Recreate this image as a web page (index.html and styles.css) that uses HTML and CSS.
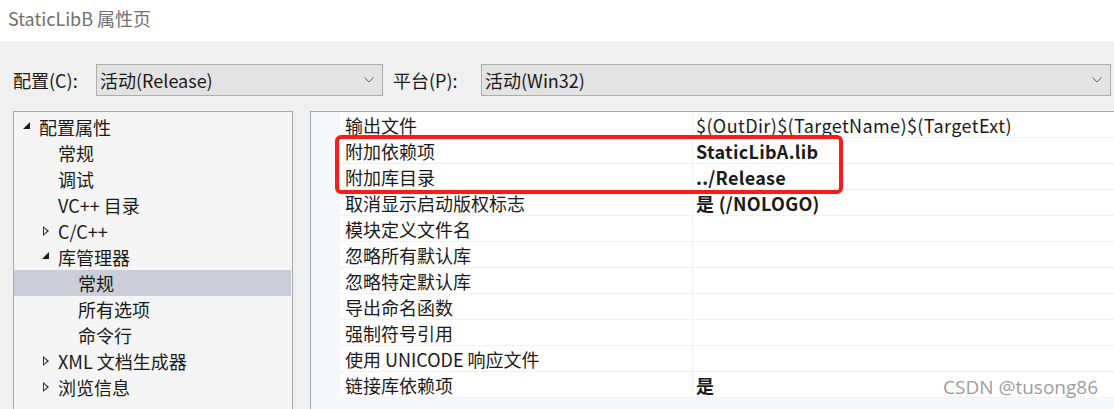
FILE: index.html
```html
<!DOCTYPE html>
<html lang="zh-CN">
<head>
  <meta charset="UTF-8" />
  <title>StaticLibB 属性页</title>
  <link rel="stylesheet" href="styles.css">
</head>
<body>
  <div class="titlebar">StaticLibB 属性页</div>

  <div class="dialog">
    <div class="toolbar">
      <label class="lbl cfg-lbl">配置(C):</label>
      <div class="combo cfg-combo">
        <span>活动(Release)</span>
        <svg class="chev" width="10" height="6" viewBox="0 0 10 6"><polyline points="0.5,0.5 5,5 9.5,0.5" fill="none" stroke="#606060" stroke-width="1"/></svg>
      </div>
      <label class="lbl plat-lbl">平台(P):</label>
      <div class="combo plat-combo">
        <span>活动(Win32)</span>
        <svg class="chev" width="10" height="6" viewBox="0 0 10 6"><polyline points="0.5,0.5 5,5 9.5,0.5" fill="none" stroke="#606060" stroke-width="1"/></svg>
      </div>
    </div>

    <div class="panes">
      <div class="tree">
        <div class="node lv0"><span class="twisty open"></span>配置属性</div>
        <div class="node lv1"><span class="twisty"></span>常规</div>
        <div class="node lv1"><span class="twisty"></span>调试</div>
        <div class="node lv1"><span class="twisty"></span>VC++ 目录</div>
        <div class="node lv1"><span class="twisty shut"></span>C/C++</div>
        <div class="node lv1"><span class="twisty open"></span>库管理器</div>
        <div class="node lv2 selected"><span class="twisty"></span>常规</div>
        <div class="node lv2"><span class="twisty"></span>所有选项</div>
        <div class="node lv2"><span class="twisty"></span>命令行</div>
        <div class="node lv1"><span class="twisty shut"></span>XML 文档生成器</div>
        <div class="node lv1"><span class="twisty shut"></span>浏览信息</div>
      </div>

      <div class="grid">
        <div class="prop"><div class="name">输出文件</div><div class="value latin">$(OutDir)$(TargetName)$(TargetExt)</div></div>
        <div class="prop"><div class="name">附加依赖项</div><div class="value bold">StaticLibA.lib</div></div>
        <div class="prop"><div class="name">附加库目录</div><div class="value bold">../Release</div></div>
        <div class="prop"><div class="name">取消显示启动版权标志</div><div class="value bold">是 (/NOLOGO)</div></div>
        <div class="prop"><div class="name">模块定义文件名</div><div class="value"></div></div>
        <div class="prop"><div class="name">忽略所有默认库</div><div class="value"></div></div>
        <div class="prop"><div class="name">忽略特定默认库</div><div class="value"></div></div>
        <div class="prop"><div class="name">导出命名函数</div><div class="value"></div></div>
        <div class="prop"><div class="name">强制符号引用</div><div class="value"></div></div>
        <div class="prop"><div class="name">使用 UNICODE 响应文件</div><div class="value"></div></div>
        <div class="prop"><div class="name">链接库依赖项</div><div class="value bold">是</div></div>

        <div class="highlight"></div>
        <div class="watermark">CSDN @tusong86</div>
      </div>
    </div>
  </div>
</body>
</html>
```

FILE: styles.css
```css
html, body {
  margin: 0;
  height: 100%;
  overflow: hidden;
}
body {
  font-family: "Noto Sans CJK SC", "Noto Sans", sans-serif;
  font-size: 18px;
  color: #1a1a1a;
  background: #f0f0f0;
}
.titlebar {
  height: 41px;
  background: #fff;
  color: #707070;
  font-size: 18px;
  line-height: 37px;
  padding-left: 8px;
}
.dialog {
  padding: 23px 0 0 13px;
}
.toolbar {
  display: flex;
  align-items: center;
  height: 32px;
}
.lbl {
  line-height: 32px;
  white-space: nowrap;
}
.cfg-lbl {
  width: 83px;
}
.plat-lbl {
  width: 88px;
  padding-left: 10px;
}
.combo {
  box-sizing: border-box;
  height: 32px;
  background: #e3e3e3;
  border: 1px solid #adadad;
  display: flex;
  align-items: center;
  justify-content: space-between;
  padding: 0 8px 0 3px;
}
.cfg-combo {
  width: 287px;
}
.plat-combo {
  width: 630px;
}
.panes {
  display: flex;
  margin-top: 15px;
  gap: 17px;
}
.tree {
  flex: none;
  box-sizing: border-box;
  width: 280px;
  height: 300px;
  background: #f5f5f5;
  border: 1px solid #a8a8a8;
  padding: 2px 1px 0 0;
}
.node {
  height: 26px;
  line-height: 26px;
  display: flex;
  align-items: center;
  white-space: nowrap;
}
.node.lv0 { padding-left: 8px; }
.node.lv1 { padding-left: 27px; }
.node.lv2 { padding-left: 47px; }
.node.selected {
  background: #cbcdd9;
}
.twisty {
  width: 17px;
  height: 26px;
  flex: none;
  position: relative;
}
.twisty.open::before {
  content: "";
  position: absolute;
  left: 1px;
  top: 8px;
  border-style: solid;
  border-width: 0 0 7px 7px;
  border-color: transparent transparent #1a1a1a transparent;
}
.twisty.shut::before {
  content: "";
  position: absolute;
  left: 2px;
  top: 8px;
  border-style: solid;
  border-width: 5px 0 5px 6px;
  border-color: transparent transparent transparent #333;
}
.twisty.shut::after {
  content: "";
  position: absolute;
  left: 3px;
  top: 10px;
  border-style: solid;
  border-width: 3px 0 3px 3.6px;
  border-color: transparent transparent transparent #f5f5f5;
}
.grid {
  position: relative;
  flex: none;
  width: 820px;
  height: 300px;
  box-sizing: border-box;
  background: #f5f7fa;
  border-top: 1px solid #a8a8a8;
  border-left: 1px solid #a8a8a8;
  padding-left: 29px;
}
.prop {
  display: flex;
  height: 26px;
  line-height: 27px;
  background: #fff;
  border-bottom: 1px solid #eef2f8;
  box-sizing: border-box;
  white-space: nowrap;
}
.prop .name {
  width: 353px;
  padding-left: 5px;
  box-sizing: border-box;
  border-right: 1px solid #eef2f8;
}
.prop .value {
  flex: 1;
  padding-left: 3px;
}
.prop .latin {
  letter-spacing: 0.4px;
}
.prop .bold {
  font-weight: bold;
  letter-spacing: 0.3px;
}
.highlight {
  position: absolute;
  left: 24px;
  top: 23px;
  width: 500px;
  height: 51px;
  border: 4px solid #ff1a1a;
  border-radius: 6px;
}
.watermark {
  position: absolute;
  left: 632px;
  top: 262px;
  font-family: "Open Sans", sans-serif;
  font-size: 19px;
  color: rgba(110, 110, 110, 0.7);
  white-space: nowrap;
}
```
